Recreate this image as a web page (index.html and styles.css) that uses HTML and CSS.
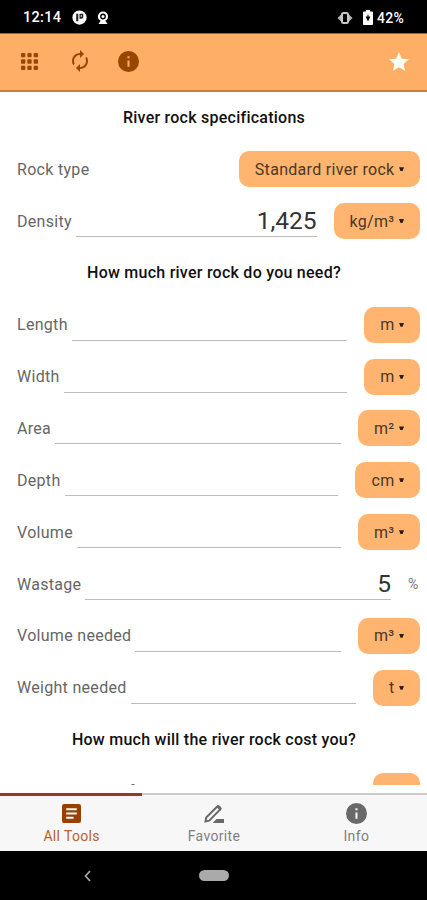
FILE: index.html
```html
<!DOCTYPE html>
<html lang="en">
<head>
<meta charset="utf-8">
<title>River Rock Calculator</title>
<link rel="stylesheet" href="styles.css">
</head>
<body>
<div class="phone">
  <div class="status">
    <span class="clock">12:14</span>
    <svg class="s-p" viewBox="0 0 16 16"><circle cx="8" cy="8" r="7.6" fill="#fff"/><path d="M4.500 12V4h2.200v8zM8 4h4v3.400q0 1.800-1.800 1.800H8z" fill="#222"/><path d="M9.300 5.500h1.200v1.800H9.300z" fill="#fff"/></svg>
    <svg class="s-cam" viewBox="0 0 12 14"><circle cx="6" cy="5.500" r="4" fill="none" stroke="#fff" stroke-width="2.200"/><circle cx="6" cy="5.500" r="1.500" fill="#fff"/><path d="M1.500 13 3.500 10h5l2 3z" fill="#fff"/></svg>
    <span class="grow"></span>
    <svg class="s-vib" viewBox="0 0 16 14"><path d="M0.500 7 4.200 3.200v7.600zM15.500 7 11.800 3.200v7.600z" fill="#b4b4b4"/><rect x="5" y="2" width="6" height="10" rx="1.500" fill="none" stroke="#c8c8c8" stroke-width="2"/></svg>
    <svg class="s-bat" viewBox="0 0 10 15"><path d="M3 0h4v1.500h2q1 0 1 1V14q0 1-1 1H1q-1 0-1-1V2.500q0-1 1-1h2z" fill="#fff"/><path d="M5 11.500 2.700 6.500h1.800V4.500h1v2h1.800z" fill="#000"/></svg>
    <span class="pct">42%</span>
  </div>
  <header class="bar">
    <svg class="i-grid" viewBox="0 0 17 17"><rect width="4.300" height="4.300" rx="1"/><rect x="6.350" width="4.300" height="4.300" rx="1"/><rect x="12.700" width="4.300" height="4.300" rx="1"/><rect y="6.350" width="4.300" height="4.300" rx="1"/><rect x="6.350" y="6.350" width="4.300" height="4.300" rx="1"/><rect x="12.700" y="6.350" width="4.300" height="4.300" rx="1"/><rect y="12.700" width="4.300" height="4.300" rx="1"/><rect x="6.350" y="12.700" width="4.300" height="4.300" rx="1"/><rect x="12.700" y="12.700" width="4.300" height="4.300" rx="1"/></svg>
    <svg class="i-sync" viewBox="1 1 22 22"><path d="M12 6v3l4-4-4-4v3c-4.420 0-8 3.580-8 8 0 1.570.46 3.030 1.240 4.260L6.700 14.800c-.45-.83-.7-1.790-.7-2.800 0-3.310 2.690-6 6-6zm6.760 1.740L17.300 9.200c.44.840.7 1.790.7 2.800 0 3.310-2.690 6-6 6v-3l-4 4 4 4v-3c4.420 0 8-3.580 8-8 0-1.570-.46-3.030-1.240-4.260z"/></svg>
    <svg class="i-info" viewBox="2 2 20 20"><path d="M12 2a10 10 0 1 0 0 20 10 10 0 0 0 0-20zm1 15h-2v-6h2v6zm0-8h-2V7h2v2z"/></svg>
    <span class="grow"></span>
    <svg class="i-star" viewBox="2 2 20 19"><path d="M12 17.270 18.180 21l-1.640-7.030L22 9.240l-7.190-.61L12 2 9.190 8.630 2 9.240l5.460 4.730L5.820 21z"/></svg>
  </header>
  <main class="form">
    <h2>River rock specifications</h2>
    <div class="row"><label>Rock type</label><span class="grow"></span><button>Standard river rock<i></i></button></div>
    <div class="row"><label>Density</label><span class="field">1,425</span><button>kg/m³<i></i></button></div>
    <h2>How much river rock do you need?</h2>
    <div class="row"><label>Length</label><span class="field"></span><button>m<i></i></button></div>
    <div class="row"><label>Width</label><span class="field"></span><button>m<i></i></button></div>
    <div class="row"><label>Area</label><span class="field"></span><button>m²<i></i></button></div>
    <div class="row"><label>Depth</label><span class="field"></span><button>cm<i></i></button></div>
    <div class="row"><label>Volume</label><span class="field"></span><button>m³<i></i></button></div>
    <div class="row"><label>Wastage</label><span class="field">5</span><span class="unit">%</span></div>
    <div class="row"><label>Volume needed</label><span class="field"></span><button>m³<i></i></button></div>
    <div class="row"><label>Weight needed</label><span class="field"></span><button>t<i></i></button></div>
    <h2>How much will the river rock cost you?</h2>
    <div class="row"><label>Price per unit of weight</label><span class="field"></span><span class="slash">/</span><button>t<i></i></button></div>
  </main>
  <nav class="tabs">
    <div class="tab active"><div class="icon"><svg class="t-doc" viewBox="3 3 18 18"><path d="M19 3H5a2 2 0 0 0-2 2v14c0 1.100.9 2 2 2h14a2 2 0 0 0 2-2V5a2 2 0 0 0-2-2zm-5 14H7v-2h7v2zm3-4H7v-2h10v2zm0-4H7V7h10v2z"/></svg></div><span>All Tools</span></div>
    <div class="tab"><div class="icon"><svg class="t-pen" viewBox="2 3 20 18"><path d="M3.500 19.500l.7-3.900L15.300 4.500q.8-.7 1.600 0l1.300 1.300q.7.800 0 1.600L7.200 18.600z" fill="none" stroke="#696969" stroke-width="2"/><path d="M14 4.500l4.500 4.500 1-2.500-3-3zM14.500 17H22v4H10.500z"/></svg></div><span>Favorite</span></div>
    <div class="tab"><div class="icon"><svg class="t-info" viewBox="2 2 20 20"><path d="M12 2a10 10 0 1 0 0 20 10 10 0 0 0 0-20zm1 15h-2v-6h2v6zm0-8h-2V7h2v2z"/></svg></div><span>Info</span></div>
  </nav>
  <div class="sys">
    <svg viewBox="0 0 7 12"><path d="M6 1 1.500 6 6 11" fill="none" stroke="#aaa" stroke-width="1.700"/></svg>
    <span class="home"></span>
  </div>
</div>
</body>
</html>
```

FILE: styles.css
```css
* { box-sizing: border-box; }
body { margin: 0; font-family: Roboto, "Liberation Sans", sans-serif; background: #fff; }
svg { display: block; flex: none; }
.phone { width: 427px; height: 900px; display: flex; flex-direction: column; overflow: hidden; }
.grow { flex: 1; }

.status { height: 33px; flex: none; background: #000; color: #fff; display: flex; align-items: center; padding: 2px 22px 0 23px; font-size: 14.5px; font-weight: 500; }
.clock { width: 39px; letter-spacing: .3px; }
.s-p { width: 15px; height: 15px; margin-left: 10px; }
.s-cam { width: 12px; height: 14px; margin-left: 10px; }
.s-vib { width: 16px; height: 14px; margin-right: 10px; }
.s-bat { width: 10px; height: 15px; margin-right: 4px; }
.pct { font-size: 14px; letter-spacing: .3px; margin-right: 1px; }

.bar { height: 59px; flex: none; background: #ffae66; border-top: 1px solid #9c6330; border-bottom: 2px solid #c77e45; display: flex; align-items: center; padding: 0 18px 2px 21px; fill: #994700; }
.i-grid { width: 17px; height: 17px; }
.i-sync { width: 22px; height: 22px; margin-left: 31px; }
.i-info { width: 21px; height: 21px; margin-left: 27px; }
.i-star { width: 20px; height: 19px; fill: #f5fff5; }

.form { flex: 1; min-height: 0; overflow: hidden; display: grid; grid-auto-rows: 51.85px; margin-top: -.5px; color: #222; }
h2 { margin: 0; padding-left: 1px; font-size: 16px; font-weight: 500; line-height: 51.8px; text-align: center; letter-spacing: .25px; color: #111; }
.row { display: flex; align-items: center; padding: 0 7px 0 17px; }
label { font-size: 16px; color: #666; letter-spacing: .3px; white-space: nowrap; }
.field { flex: 1; height: 32px; margin: 0 17px 0 4px; border-bottom: 1px solid #bcbcbc; text-align: right; font-size: 24.5px; line-height: 31px; color: #333; }
button { height: 36px; border: 0; border-radius: 10px; background: #ffb570; padding: 0 16px; display: flex; align-items: center; gap: 4.5px; font: 16px Roboto, sans-serif; letter-spacing: .3px; color: #4a3826; }
button i { width: 5px; height: 4px; background: #2c1d10; clip-path: polygon(0 0, 100% 0, 70% 100%, 30% 100%); }
.unit { width: 12px; font-size: 14px; color: #777; }
.slash { font-size: 16px; color: #666; margin-right: 8px; }

.tabs { height: 66px; flex: none; background: #f7f7f7; display: flex; border-top: 8px solid #fff; }
.tab { flex: 1; border-top: 2px solid #ccc; display: flex; flex-direction: column; align-items: center; font-size: 14px; letter-spacing: .35px; padding-left: 1px; color: #808080; fill: #696969; }
.tab.active { border-top: 3px solid #943a27; color: #b5602f; fill: #994000; }
.icon { height: 21px; margin-top: 8px; display: flex; align-items: center; }
.tab.active .icon { margin-top: 7px; }
.tab span { margin-top: 4px; line-height: 16px; }
.t-doc { width: 19px; height: 19px; }
.t-pen { width: 20px; height: 18px; }
.t-info { width: 21px; height: 21px; }
.sys { height: 49px; flex: none; background: #000; display: flex; align-items: center; padding-left: 84px; }
.sys svg { width: 7px; height: 12px; }
.home { width: 30px; height: 11px; border-radius: 6px; background: #aaa; margin-left: 108px; }
```
